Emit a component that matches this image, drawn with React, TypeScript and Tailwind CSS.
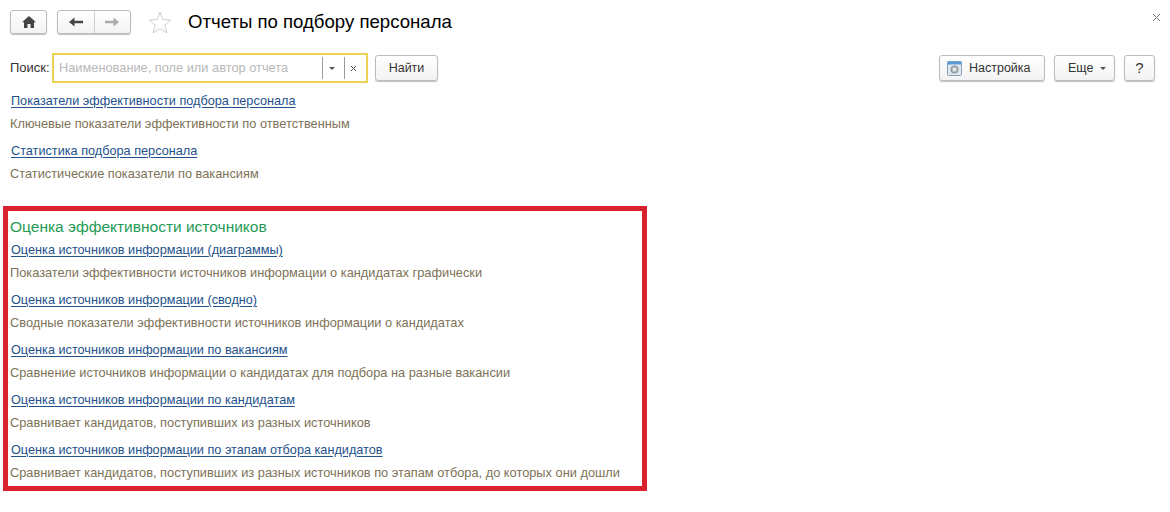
const font = { fontFamily: '"Liberation Sans", Arial, sans-serif' };

const btn =
  'flex items-center justify-center h-[24px] bg-gradient-to-b from-white to-[#f3f3f3] border border-[#bdbdbd] rounded-[3px] shadow-[0_1px_1px_rgba(0,0,0,0.25)] text-[12.5px] text-[#333]';

const ReportItem = ({ title, text }: { title: string; text: string }) => (
  <div className="h-[50px]">
    <a className="block ml-[1px] h-[23px] leading-[16px] text-[12.7px] text-[#24528c] underline underline-offset-2">
      {title}
    </a>
    <p className="leading-[16px] text-[12.8px] text-[#7d7257]">{text}</p>
  </div>
);

const sourceReports = [
  {
    title: 'Оценка источников информации (диаграммы)',
    text: 'Показатели эффективности источников информации о кандидатах графически',
  },
  {
    title: 'Оценка источников информации (сводно)',
    text: 'Сводные показатели эффективности источников информации о кандидатах',
  },
  {
    title: 'Оценка источников информации по вакансиям',
    text: 'Сравнение источников информации о кандидатах для подбора на разные вакансии',
  },
  {
    title: 'Оценка источников информации по кандидатам',
    text: 'Сравнивает кандидатов, поступивших из разных источников',
  },
  {
    title: 'Оценка источников информации по этапам отбора кандидатов',
    text: 'Сравнивает кандидатов, поступивших из разных источников по этапам отбора, до которых они дошли',
  },
];

export default function App() {
  return (
    <div className="relative w-[1170px] h-[512px] bg-white overflow-hidden" style={font}>
      {/* Top bar */}
      <div className="flex items-center h-[24px] mt-[10px] ml-[10px]">
        <button className={`${btn} w-[37px]`}>
          <svg width="14" height="12" viewBox="0 0 14 12" fill="#444">
            <path d="M7 0 L14 6.2 L12 6.2 L12 12 L8.5 12 L8.5 8 L5.5 8 L5.5 12 L2 12 L2 6.2 L0 6.2 Z" />
          </svg>
        </button>
        <div className={`${btn} w-[74px] ml-[10px]`}>
          <div className="flex-1 flex items-center justify-center border-r border-[#d0d0d0] h-full">
            <svg width="14" height="10" viewBox="0 0 14 10" fill="#444">
              <path d="M0 5 L5.5 0.5 L5.5 3.8 L14 3.8 L14 6.2 L5.5 6.2 L5.5 9.5 Z" />
            </svg>
          </div>
          <div className="flex-1 flex items-center justify-center h-full">
            <svg width="14" height="10" viewBox="0 0 14 10" fill="#aaa">
              <path d="M14 5 L8.5 0.5 L8.5 3.8 L0 3.8 L0 6.2 L8.5 6.2 L8.5 9.5 Z" />
            </svg>
          </div>
        </div>
        <svg className="ml-[17px]" width="24" height="23" viewBox="0 0 24 23" fill="none" stroke="#cfcfcf">
          <path d="M12 1 L15 8.6 L23 9 L16.8 14 L18.9 22 L12 17.5 L5.1 22 L7.2 14 L1 9 L9 8.6 Z" />
        </svg>
        <h1 className="ml-[16px] text-[18.6px] text-black leading-[24px]">Отчеты по подбору персонала</h1>
        <svg className="ml-auto mr-[9px] mb-[10px]" width="9" height="9" viewBox="0 0 9 9" stroke="#777" fill="none">
          <path d="M1 1 L8 8 M8 1 L1 8" />
        </svg>
      </div>

      {/* Search row */}
      <div className="flex items-center h-[30px] mt-[19px] pl-[10px]">
        <span className="text-[13px] text-[#333] w-[42px]">Поиск:</span>
        <div className="flex items-center w-[316px] h-[30px] border-[2px] border-[#ecd052] bg-white">
          <span className="flex-1 pl-[5px] text-[12.8px] text-[#b8b8b8]">Наименование, поле или автор отчета</span>
          <span className="flex items-center justify-center w-[22px] h-[22px] border-l border-[#9a9a9a] pr-[3px]">
            <span className="w-0 h-0 border-x-[3px] border-x-transparent border-t-[3px] border-t-[#555]" />
          </span>
          <span className="flex items-center justify-center w-[22px] h-[22px] border-l border-[#9a9a9a] pr-[4px]">
            <svg width="7" height="7" viewBox="0 0 7 7" stroke="#555" fill="none">
              <path d="M1 1 L6 6 M6 1 L1 6" />
            </svg>
          </span>
        </div>
        <button className={`${btn} w-[63px] ml-[7px] h-[26px]`}>Найти</button>

        <button className={`${btn} !justify-start w-[106px] h-[26px] ml-auto pl-[7px] gap-[7px]`}>
          <svg width="15" height="15" viewBox="0 0 15 15">
            <rect x="0.5" y="0.5" width="14" height="14" rx="1" fill="#dfe6ec" stroke="#8aa0b4" />
            <rect x="0.5" y="0.5" width="14" height="3" fill="#5b9bd5" />
            <circle cx="7.5" cy="8.5" r="3.6" fill="#b4bcc4" stroke="#7f8b96" />
            <circle cx="7.5" cy="8.5" r="1.4" fill="#f2f4f6" />
          </svg>
          Настройка
        </button>
        <button className={`${btn} !justify-start w-[61px] h-[26px] ml-[9px] pl-[13px] gap-[7px]`}>
          Еще
          <span className="w-0 h-0 border-x-[3px] border-x-transparent border-t-[3px] border-t-[#555]" />
        </button>
        <button className={`${btn} w-[31px] h-[26px] ml-[9px] mr-[15px] text-[15px]`}>?</button>
      </div>

      {/* Reports */}
      <div className="pl-[10px] mt-[10px]">
        <ReportItem
          title="Показатели эффективности подбора персонала"
          text="Ключевые показатели эффективности по ответственным"
        />
        <ReportItem title="Статистика подбора персонала" text="Статистические показатели по вакансиям" />
      </div>

      {/* Highlighted group */}
      <div className="w-[644px] h-[285px] ml-[3px] mt-[13px] border-[5px] border-[#d8232f] pl-[2px] pt-[6px]">
        <h2 className="text-[15.5px] leading-[20px] text-[#1f9a55] mb-[5px]">Оценка эффективности источников</h2>
        {sourceReports.map((r) => (
          <ReportItem key={r.title} title={r.title} text={r.text} />
        ))}
      </div>
    </div>
  );
}
